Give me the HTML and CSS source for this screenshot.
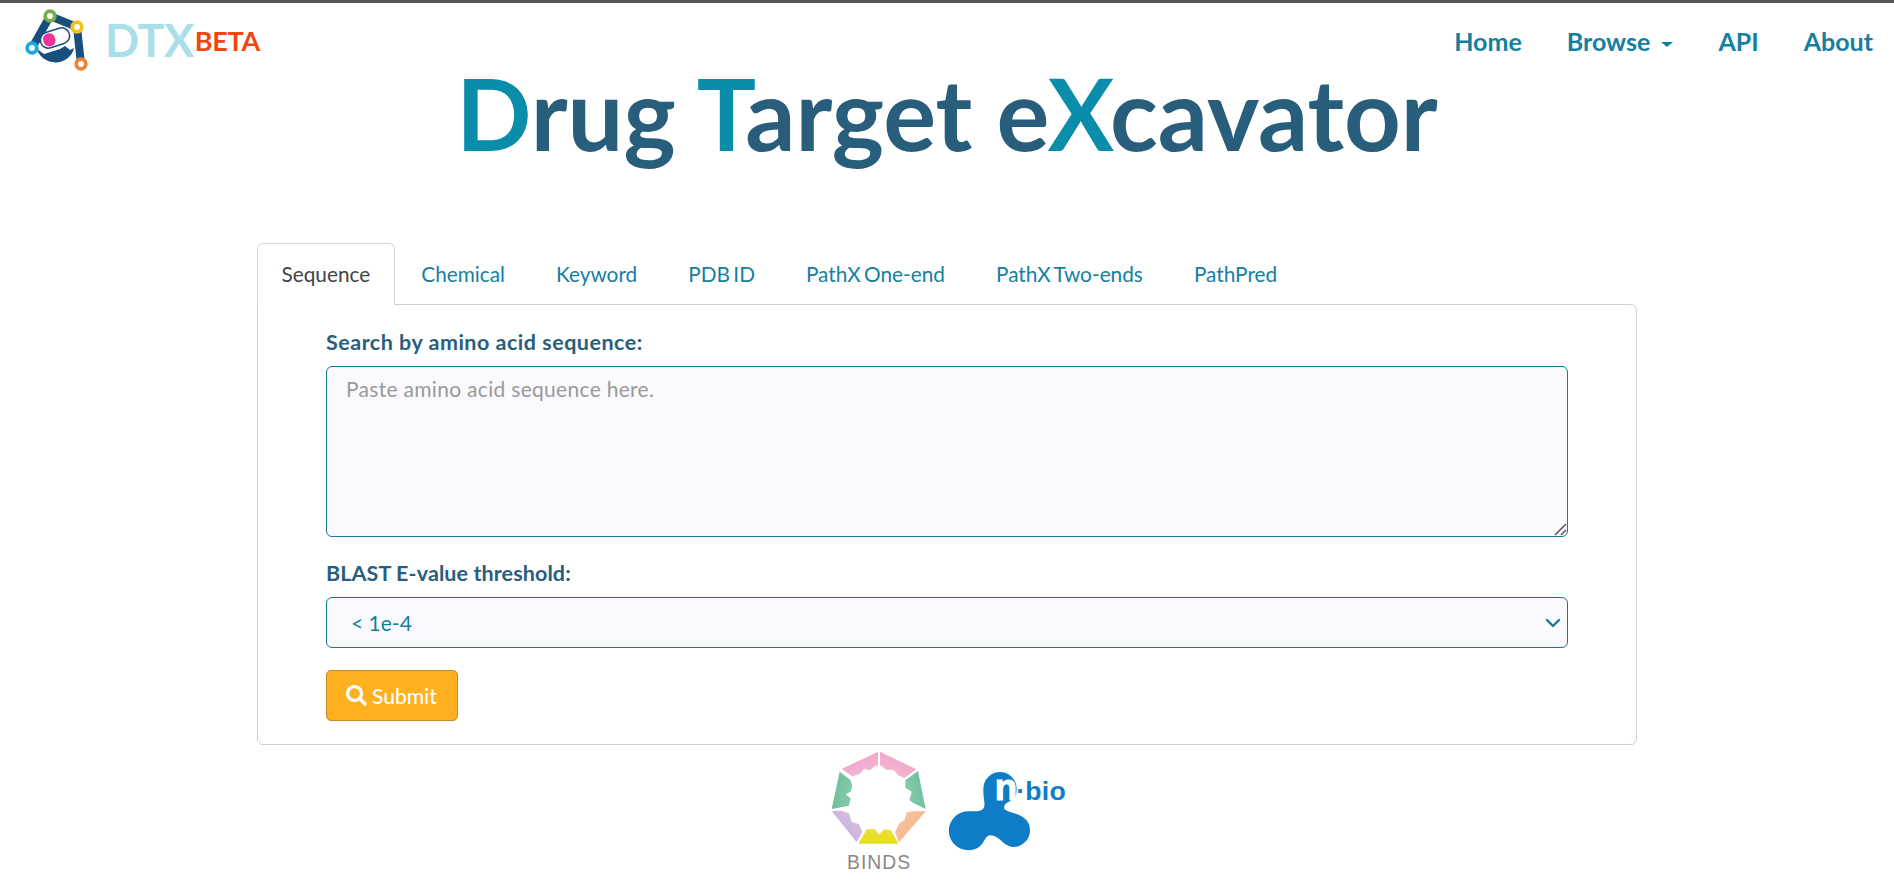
FILE: index.html
```html
<!DOCTYPE html>
<html lang="en">
<head>
  <meta charset="UTF-8">
  <meta name="viewport" content="width=device-width, initial-scale=1.0">
  <title>Drug Target eXcavator</title>
  <link rel="stylesheet" href="styles.css">
</head>
<body>

  <nav class="navbar">
    <a class="brand" href="#">
      <svg class="brand-icon" viewBox="20 5 70 70" width="70" height="70">
        <path d="M37 49 L44 54 L60 49 L65 46 L70 50 L74 48 A19 18 0 0 1 37 49 Z" fill="#17507f"/>
        <path d="M32 48 L50 16 L77 27 L81 64" fill="none" stroke="#17507f" stroke-width="8"/>
        <g transform="rotate(-18 55 38)">
          <rect x="40" y="30" width="30" height="16" rx="8" fill="#fff" stroke="#17507f" stroke-width="1.500"/>
          <rect x="43" y="31.500" width="12" height="13" rx="5.500" fill="#f0329b"/>
        </g>
        <circle cx="32" cy="48" r="4.800" fill="#fff" stroke="#1ca8e6" stroke-width="3.800"/>
        <circle cx="50" cy="16" r="4.800" fill="#fff" stroke="#79ad47" stroke-width="3.800"/>
        <circle cx="77" cy="27" r="4.800" fill="#fff" stroke="#f7c018" stroke-width="3.800"/>
        <circle cx="81" cy="64" r="4.800" fill="#fff" stroke="#e8863a" stroke-width="3.800"/>
      </svg>
      <span class="brand-name">DTX</span><span class="brand-beta">BETA</span>
    </a>
    <ul class="nav-links">
      <li><a href="#">Home</a></li>
      <li><a href="#">Browse <span class="caret"></span></a></li>
      <li><a href="#">API</a></li>
      <li><a href="#">About</a></li>
    </ul>
  </nav>

  <h1 class="title"><span>D</span>rug <span>T</span>arget e<span>X</span>cavator</h1>

  <div class="container">
    <ul class="tabs">
      <li class="tab active">Sequence</li>
      <li class="tab">Chemical</li>
      <li class="tab">Keyword</li>
      <li class="tab">PDB ID</li>
      <li class="tab">PathX One-end</li>
      <li class="tab">PathX Two-ends</li>
      <li class="tab">PathPred</li>
    </ul>

    <form class="panel">
      <label class="field-label" for="sequence">Search by amino acid sequence:</label>
      <textarea id="sequence" class="field-text" placeholder="Paste amino acid sequence here."></textarea>

      <label class="field-label field-label-short" for="evalue">BLAST E-value threshold:</label>
      <select id="evalue" class="field-select">
        <option>&lt; 1e-4</option>
        <option>&lt; 1e-3</option>
        <option>&lt; 1e-2</option>
      </select>

      <button class="submit" type="button">
        <svg viewBox="0 0 512 512" width="21" height="21"><path fill="#fff" d="M505 442.700 405.300 343c-4.500-4.500-10.600-7-17-7H372c27.600-35.300 44-79.700 44-128C416 93.100 322.900 0 208 0S0 93.100 0 208s93.100 208 208 208c48.300 0 92.700-16.400 128-44v16.300c0 6.400 2.500 12.500 7 17l99.700 99.700c9.400 9.400 24.600 9.400 33.900 0l28.300-28.300c9.400-9.400 9.400-24.600.1-34zM208 336c-70.700 0-128-57.200-128-128 0-70.700 57.200-128 128-128 70.700 0 128 57.200 128 128 0 70.700-57.200 128-128 128z"/></svg>
        Submit
      </button>
    </form>
  </div>

  <footer class="partners">
    <svg class="binds" viewBox="0 0 330 381" width="110" height="127">
      <defs>
        <radialGradient id="bindsFade" gradientUnits="userSpaceOnUse" cx="162" cy="165" r="150">
          <stop offset="0.5" stop-color="#fff" stop-opacity="0.2"/>
          <stop offset="1" stop-color="#fff" stop-opacity="0"/>
        </radialGradient>
      </defs>
      <polygon points="159,20 50,72 82,94 105,86 117,72 135,76 150,62 159,62" fill="#f2a6ca"/>
      <polygon points="165,20 274,73 238,99 222,92 205,74 183,74 170,62 165,62" fill="#f2a6ca"/>
      <polygon points="279,78 302,192 265,174 253,165 260,140 241,128 241,105" fill="#6cc09b"/>
      <polygon points="302,199 265,199 246,202 238,225 223,235 210,262 222,292" fill="#f6b78c"/>
      <polygon points="100,296 220,296 198,256 178,253 162,268 150,253 125,253" fill="#e6dc14"/>
      <polygon points="20,198 95,292 112,262 102,238 80,230 72,205 50,197" fill="#cdb3da"/>
      <polygon points="44,80 20,192 72,182 77,160 62,148 77,140 82,122 76,105" fill="#6cc09b"/>
      <circle cx="162" cy="165" r="150" fill="url(#bindsFade)"/>
      <text x="66" y="372" class="binds-text">BINDS</text>
    </svg>
    <svg class="nbio" viewBox="0 0 390 270" width="130" height="90">
      <path d="M115 65 A50 50 0 0 1 215 65 C214 85 212 90 205 97 C195 107 175 105 178 125 C185 140 255 135 255 190 A50 50 0 0 1 205 240 C175 240 165 205 135 205 C115 205 120 250 70 250 A58 58 0 0 1 70 133 C100 133 122 135 118 105 C116 90 115 80 115 65 Z" fill="#0e7cc7"/>
      <text x="149" y="98" class="nbio-n">n</text>
      <text x="214" y="98" class="nbio-text">·bio</text>
    </svg>
  </footer>

</body>
</html>
```

FILE: styles.css
```css
* {
  margin: 0;
  padding: 0;
  box-sizing: border-box;
}

body {
  font-family: 'Lato', 'Open Sans', sans-serif;
  background-color: #fff;
  color: #444;
  border-top: 3px solid #555;
}

a {
  color: inherit;
  text-decoration: none;
}

.navbar {
  display: flex;
  justify-content: space-between;
  align-items: flex-start;
  height: 59px;
  padding-left: 20px;
  padding-right: 21px;
}

.brand {
  display: flex;
  align-items: center;
  height: 70px;
  margin-top: 2px;
}

.brand-name {
  margin-left: 15px;
  font-size: 45px;
  font-weight: 700;
  letter-spacing: -0.5px;
  color: #a8dfe8;
}

.brand-beta {
  margin-left: 1px;
  font-size: 27px;
  font-weight: 700;
  letter-spacing: -0.3px;
  color: #f0460f;
}

.nav-links {
  display: flex;
  gap: 45px;
  list-style: none;
  margin-top: 23px;
  font-size: 25px;
  font-weight: 700;
  color: #14809f;
}

.caret {
  display: inline-block;
  width: 0;
  height: 0;
  margin-left: 5px;
  vertical-align: 4px;
  border-top: 5px solid #14809f;
  border-left: 6px solid transparent;
  border-right: 6px solid transparent;
}

.title {
  height: 181px;
  margin-top: -9px;
  margin-bottom: 9px;
  text-align: center;
  font-size: 99px;
  line-height: 120px;
  font-weight: 700;
  color: #285e7c;
}

.title span {
  color: #0a8dab;
}

.container {
  width: 1380px;
  margin: 0 auto;
}

.tabs {
  display: flex;
  gap: 2px;
  list-style: none;
  margin-bottom: -1px;
  font-size: 20.8px;
  word-spacing: -2px;
  color: #14809f;
}

.tab {
  padding: 16.5px 23.5px 0;
  height: 62px;
  border: 1px solid transparent;
  border-radius: 6px 6px 0 0;
}

.tab.active {
  color: #444;
  background-color: #fff;
  border-color: #d6d6d6;
  border-bottom-color: #fff;
  position: relative;
  z-index: 1;
}

.panel {
  display: flex;
  flex-direction: column;
  align-items: flex-start;
  height: 441px;
  padding: 24px 68px 0;
  border: 1px solid #d0d0d0;
  border-radius: 0 6px 6px 6px;
}

.field-label {
  display: block;
  height: 37px;
  font-size: 21.5px;
  font-weight: 700;
  letter-spacing: 0.5px;
  color: #285e7c;
}

.field-label-short {
  height: 37px;
  letter-spacing: 0.1px;
}

.field-text {
  display: block;
  width: 100%;
  height: 171px;
  padding: 9px 19px;
  margin-bottom: 23px;
  font-family: inherit;
  font-size: 21px;
  letter-spacing: 0.3px;
  color: #14809f;
  background-color: #f9f9fe;
  border: 1px solid #147a96;
  border-radius: 6px;
  outline: none;
}

.field-text::placeholder {
  color: #999;
  opacity: 1;
}

.field-text::-webkit-resizer {
  background-image: url("data:image/svg+xml,%3csvg xmlns='http://www.w3.org/2000/svg' viewBox='0 0 16 16'%3e%3cpath fill='none' stroke='%23555' stroke-width='1.5' d='M3 14L14 3M9 14l5-5'/%3e%3c/svg%3e");
  background-repeat: no-repeat;
  background-size: 16px 16px;
}

.field-select {
  display: block;
  width: 100%;
  height: 51px;
  padding: 0 24px;
  margin-bottom: 22px;
  font-family: inherit;
  font-size: 21px;
  color: #14809f;
  background-color: #f9f9fe;
  background-image: url("data:image/svg+xml,%3csvg xmlns='http://www.w3.org/2000/svg' viewBox='0 0 16 16'%3e%3cpath fill='none' stroke='%23147a96' stroke-linecap='round' stroke-linejoin='round' stroke-width='2.400' d='M2 5l6 6 6-6'/%3e%3c/svg%3e");
  background-repeat: no-repeat;
  background-position: right 6px center;
  background-size: 16px 16px;
  border: 1px solid #147a96;
  border-radius: 6px;
  appearance: none;
}

.submit {
  display: flex;
  align-items: center;
  gap: 5px;
  width: 132px;
  height: 51px;
  padding-left: 19px;
  font-family: inherit;
  font-size: 21px;
  font-weight: 500;
  color: #fff;
  background-color: #ffb01f;
  border: 1px solid #c8892a;
  border-radius: 5px;
}

.partners {
  display: flex;
  justify-content: center;
  align-items: flex-start;
  gap: 10px;
  padding-left: 6px;
}

.binds-text {
  font-family: 'Liberation Sans', sans-serif;
  font-size: 58px;
  letter-spacing: 3px;
  fill: #888;
}

.nbio {
  margin-top: 22px;
}

.nbio-n {
  font-family: 'Liberation Sans', sans-serif;
  font-size: 110px;
  font-weight: 700;
  fill: #fff;
  stroke: #fff;
  stroke-width: 3px;
}

.nbio-text {
  font-family: 'Liberation Sans', sans-serif;
  font-size: 80px;
  font-weight: 700;
  letter-spacing: 0.5px;
  fill: #0e7cc7;
}
```
